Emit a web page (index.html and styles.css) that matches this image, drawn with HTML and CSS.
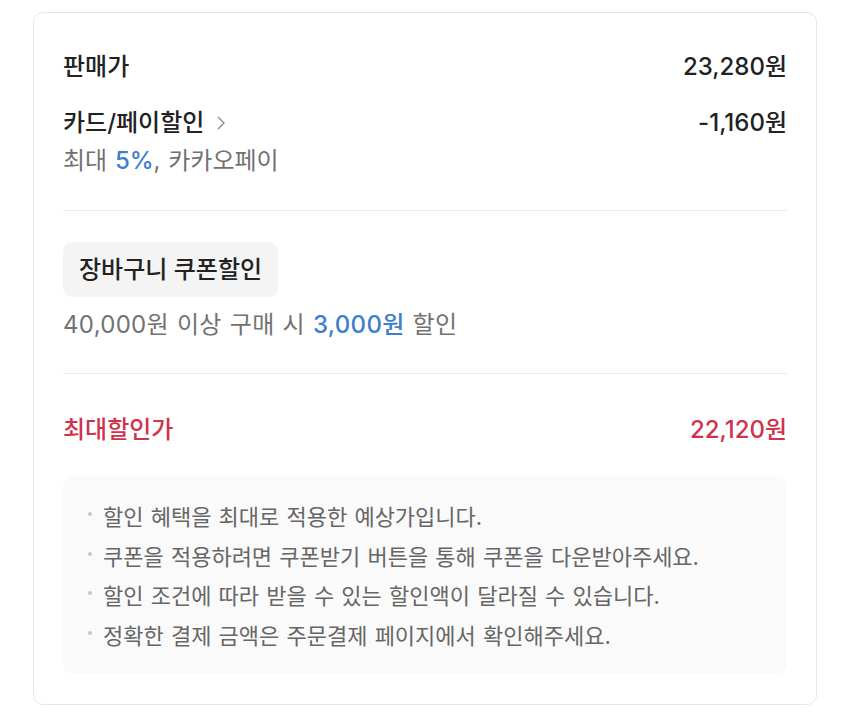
FILE: index.html
```html
<!DOCTYPE html>
<html lang="ko">
<head>
  <meta charset="UTF-8">
  <meta name="viewport" content="width=device-width, initial-scale=1.0">
  <title>할인 정보</title>
  <link rel="stylesheet" href="styles.css">
</head>
<body>
  <div class="page">
    <div class="card">
      <div class="section">
        <div class="row">
          <span class="label">판매가</span>
          <span class="value">23,280원</span>
        </div>
        <div class="row row-card">
          <span class="label">카드/페이할인
            <svg class="chev" width="10" height="16" viewBox="0 0 10 16"><path d="M2 2l6 6-6 6" fill="none" stroke="#8a8a8a" stroke-width="1.4"/></svg>
          </span>
          <span class="value">-1,160원</span>
        </div>
        <p class="sub">최대 <b class="blue">5%</b>, 카카오페이</p>
      </div>

      <div class="section coupon">
        <span class="chip">장바구니 쿠폰할인</span>
        <p class="sub">40,000원 이상 구매 시 <b class="blue">3,000원</b> 할인</p>
      </div>

      <div class="total">
        <div class="row red">
          <span class="label">최대할인가</span>
          <span class="value">22,120원</span>
        </div>
        <ul class="notice">
          <li>할인 혜택을 최대로 적용한 예상가입니다.</li>
          <li>쿠폰을 적용하려면 쿠폰받기 버튼을 통해 쿠폰을 다운받아주세요.</li>
          <li>할인 조건에 따라 받을 수 있는 할인액이 달라질 수 있습니다.</li>
          <li>정확한 결제 금액은 주문결제 페이지에서 확인해주세요.</li>
        </ul>
      </div>
    </div>
  </div>
</body>
</html>
```

FILE: styles.css
```css
* {
  margin: 0;
  padding: 0;
  box-sizing: border-box;
}
body {
  background: #fff;
  font-family: Inter, "Noto Sans CJK KR", sans-serif;
  color: #222;
}
.page {
  padding: 12px 33px;
}
.card {
  border: 1px solid #e6e6e6;
  border-radius: 10px;
  padding: 39px 29px 30px;
}
.section {
  border-bottom: 1px solid #ebebeb;
  padding-bottom: 34px;
}
.row {
  display: flex;
  justify-content: space-between;
  align-items: center;
  font-size: 24px;
  line-height: 30px;
  font-weight: 500;
}
.row-card {
  margin-top: 26px;
}
.label {
  display: flex;
  align-items: center;
}
.chev {
  margin-left: 12px;
}
.sub {
  margin-top: 8px;
  font-size: 24px;
  line-height: 30px;
  color: #727272;
  word-spacing: 1px;
}
.blue {
  color: #3d7fcc;
  font-weight: 500;
}
.coupon {
  padding-top: 31px;
  padding-bottom: 33px;
}
.chip {
  display: inline-block;
  background: #f4f4f4;
  border-radius: 9px;
  padding: 12px 16px;
  font-size: 24px;
  line-height: 31px;
  font-weight: 500;
}
.coupon .sub {
  margin-top: 13px;
  letter-spacing: 0.3px;
}
.total {
  padding-top: 41px;
}
.red {
  color: #d0334d;
}
.notice {
  list-style: none;
  margin-top: 31px;
  background: #fafafa;
  border-radius: 10px;
  padding: 22px 20px 17px 40px;
}
.notice li {
  position: relative;
  font-size: 22px;
  line-height: 39.7px;
  color: #666;
  word-spacing: 1px;
}
.notice li::before {
  content: "";
  position: absolute;
  left: -15px;
  top: 14px;
  width: 4px;
  height: 4px;
  border-radius: 50%;
  background: #c8c8c8;
}
```
